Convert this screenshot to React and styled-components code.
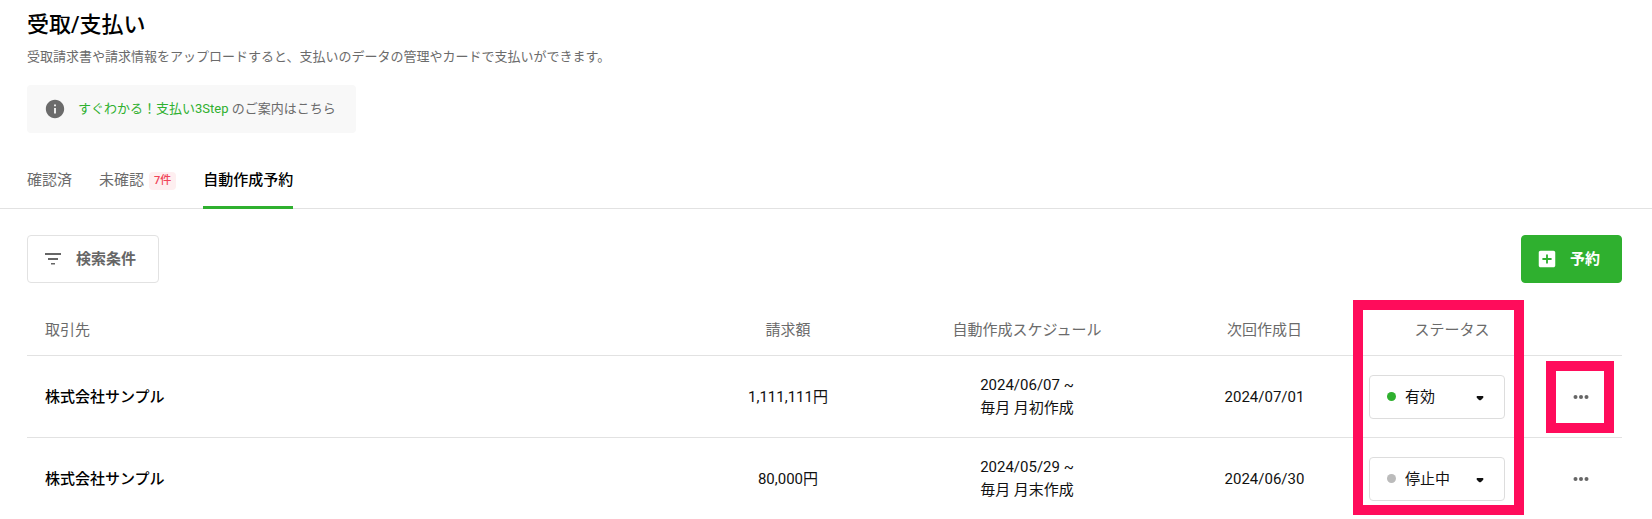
import React, { useState } from 'react'
import styled, { createGlobalStyle } from 'styled-components'

const GlobalStyle = createGlobalStyle`
  * {
    box-sizing: border-box;
  }
  body {
    margin: 0;
    background: #fff;
    color: #111;
    font-family: Roboto, 'Noto Sans CJK JP', sans-serif;
    font-size: 15px;
    line-height: 23px;
  }
  button, select {
    font: inherit;
    color: inherit;
  }
`;

const Page = styled.main`
  padding: 8px 0 0;
`;

const Header = styled.header`
  padding: 0 30px 0 27px;
`;

const Title = styled.h1`
  margin: 0;
  font-size: 22px;
  font-weight: 500;
  line-height: 33px;
  color: #000;
`;

const Description = styled.p`
  margin: 6px 0 18px;
  font-size: 13px;
  line-height: 20px;
  color: #6b6b6b;
`;

const Notice = styled.div`
  display: inline-flex;
  align-items: center;
  gap: 12px;
  height: 48px;
  padding: 0 20px 0 17px;
  border-radius: 4px;
  background: #f8f8f8;
  font-size: 13px;
  line-height: 20px;
  color: #6b6b6b;
`;

const NoticeLink = styled.a`
  color: #2fb02f;
  text-decoration: none;
`;

const Tabs = styled.nav`
  display: flex;
  gap: 27px;
  height: 56px;
  margin-top: 20px;
  padding: 0 27px;
  border-bottom: 1px solid #e2e2e2;
`;

const Tab = styled.a`
  display: flex;
  align-items: center;
  height: 56px;
  padding-top: 1px;
  border-bottom: 3px solid ${({ $active }) => ($active ? '#2fb02f' : 'transparent')};
  font-weight: ${({ $active }) => ($active ? 500 : 400)};
  color: ${({ $active }) => ($active ? '#000' : '#6b6b6b')};
  text-decoration: none;
`;

const Badge = styled.span`
  margin: 2px 0 0 5px;
  padding: 0 5px;
  border-radius: 4px;
  background: #feeff0;
  font-size: 11px;
  font-weight: 500;
  line-height: 18px;
  color: #f04458;
`;

const Toolbar = styled.div`
  display: flex;
  justify-content: space-between;
  padding: 26px 30px 23px 27px;
`;

const Button = styled.button`
  display: flex;
  align-items: center;
  gap: ${({ $primary }) => ($primary ? 12 : 14)}px;
  height: 48px;
  padding: 0 ${({ $primary }) => ($primary ? 21 : 22)}px 0 ${({ $primary }) => ($primary ? 14 : 16)}px;
  border: 1px solid ${({ $primary }) => ($primary ? '#2fb02f' : '#e2e2e2')};
  border-radius: 4px;
  background: ${({ $primary }) => ($primary ? '#2fb02f' : '#fff')};
  color: ${({ $primary }) => ($primary ? '#fff' : '#666')};
  font-weight: 700;
  cursor: pointer;
`;

const TableArea = styled.section`
  position: relative;
  margin: 0 30px 0 27px;
`;

const Table = styled.table`
  width: 100%;
  table-layout: fixed;
  border-collapse: collapse;
`;

const Th = styled.th`
  width: ${({ $width }) => $width || 'auto'};
  height: 49px;
  padding: 1px 18px 0;
  border-bottom: 1px solid #e2e2e2;
  font-weight: 400;
  color: #6b6b6b;
  text-align: ${({ $align }) => $align || 'center'};
`;

const Row = styled.tr`
  height: 82px;
  border-bottom: 1px solid #e2e2e2;

  &:last-child {
    border-bottom: 0;
  }
`;

const Td = styled.td`
  padding: 2px 0 0;
  text-align: center;
`;

const Company = styled(Td)`
  padding-left: 18px;
  font-weight: 500;
  color: #000;
  text-align: left;
`;

const StatusCell = styled(Td)`
  padding-left: 5px;
  text-align: left;
`;

const StatusField = styled.div`
  position: relative;
  width: 136px;
  height: 44px;

  svg {
    position: absolute;
    top: 10px;
    right: 13px;
    pointer-events: none;
  }
`;

const StatusDot = styled.span`
  position: absolute;
  top: 17px;
  left: 18px;
  width: 9px;
  height: 9px;
  border-radius: 50%;
  background: ${({ $on }) => ($on ? '#2fb02f' : '#bbb')};
  pointer-events: none;
`;

const StatusSelect = styled.select`
  appearance: none;
  width: 100%;
  height: 100%;
  padding: 0 35px;
  border: 1px solid #ddd;
  border-radius: 4px;
  background: #fff;
`;

const MoreButton = styled.button`
  padding: 0;
  border: 0;
  background: none;
  color: #666;
  vertical-align: middle;
  cursor: pointer;

  svg {
    display: block;
  }
`;

const Highlight = styled.div`
  position: absolute;
  top: ${({ $top }) => $top}px;
  right: ${({ $right }) => $right}px;
  width: ${({ $width }) => $width}px;
  height: ${({ $height }) => $height}px;
  border: 10px solid #ff0c5b;
  pointer-events: none;
`;

const InfoIcon = () => (
  <svg width="22" height="22" viewBox="0 0 24 24" fill="currentColor">
    <path d="M12 2C6.48 2 2 6.48 2 12s4.48 10 10 10 10-4.48 10-10S17.52 2 12 2zm1 15h-2v-6h2v6zm0-8h-2V7h2v2z" />
  </svg>
);

const FilterIcon = () => (
  <svg width="18" height="18" viewBox="0 0 18 18" fill="currentColor">
    <path d="M1 3h16v2H1zM4 8h10v2H4zM7 13h4v1.500H7z" />
  </svg>
);

const AddIcon = () => (
  <svg width="22" height="22" viewBox="0 0 24 24" fill="currentColor">
    <path d="M19 3H5c-1.11 0-2 .9-2 2v14c0 1.1.89 2 2 2h14c1.1 0 2-.9 2-2V5c0-1.1-.9-2-2-2zm-2 10h-4v4h-2v-4H7v-2h4V7h2v4h4v2z" />
  </svg>
);

const CaretIcon = () => (
  <svg width="24" height="24" viewBox="0 0 24 24" fill="currentColor">
    <path d="M9 11h6q1 1 0 2l-2 2q-1 .6-2 0l-2-2q-1-1 0-2z" />
  </svg>
);

const MoreIcon = () => (
  <svg width="24" height="24" viewBox="0 0 24 24" fill="currentColor">
    <circle cx="6.500" cy="12" r="2" />
    <circle cx="12" cy="12" r="2" />
    <circle cx="17.500" cy="12" r="2" />
  </svg>
);

const reservations = [
  { id: 1, company: '株式会社サンプル', amount: '1,111,111円', from: '2024/06/07 ~', cycle: '毎月 月初作成', next: '2024/07/01', status: 'active' },
  { id: 2, company: '株式会社サンプル', amount: '80,000円', from: '2024/05/29 ~', cycle: '毎月 月末作成', next: '2024/06/30', status: 'stopped' },
];

const Status = ({ initial }) => {
  const [status, setStatus] = useState(initial);
  return (
    <StatusField>
      <StatusSelect aria-label="ステータス" value={status} onChange={(e) => setStatus(e.target.value)}>
        <option value="active">有効</option>
        <option value="stopped">停止中</option>
      </StatusSelect>
      <StatusDot $on={status === 'active'} />
      <CaretIcon />
    </StatusField>
  );
}

const App = () => {
  return (
    <Page>
      <GlobalStyle />
      <Header>
        <Title>受取/支払い</Title>
        <Description>受取請求書や請求情報をアップロードすると、支払いのデータの管理やカードで支払いができます。</Description>
        <Notice>
          <InfoIcon />
          <span><NoticeLink href="#guide">すぐわかる！支払い3Step</NoticeLink> のご案内はこちら</span>
        </Notice>
      </Header>
      <Tabs>
        <Tab href="#confirmed">確認済</Tab>
        <Tab href="#unconfirmed">未確認<Badge>7件</Badge></Tab>
        <Tab href="#reserved" $active aria-current="page">自動作成予約</Tab>
      </Tabs>
      <Toolbar>
        <Button type="button"><FilterIcon />検索条件</Button>
        <Button type="button" $primary><AddIcon />予約</Button>
      </Toolbar>
      <TableArea>
        <Table>
          <thead>
            <tr>
              <Th $align="left">取引先</Th>
              <Th $width="202px">請求額</Th>
              <Th $width="276px">自動作成スケジュール</Th>
              <Th $width="199px">次回作成日</Th>
              <Th $width="176px">ステータス</Th>
              <Th $width="82px" aria-label="操作" />
            </tr>
          </thead>
          <tbody>
            {reservations.map((item) => (
              <Row key={item.id}>
                <Company>{item.company}</Company>
                <Td>{item.amount}</Td>
                <Td>{item.from}<br />{item.cycle}</Td>
                <Td>{item.next}</Td>
                <StatusCell><Status initial={item.status} /></StatusCell>
                <Td>
                  <MoreButton type="button" aria-label="メニュー"><MoreIcon /></MoreButton>
                </Td>
              </Row>
            ))}
          </tbody>
        </Table>
        <Highlight $top={-6} $right={98} $width={171} $height={215} />
        <Highlight $top={55} $right={8} $width={68} $height={72} />
      </TableArea>
    </Page>
  );
}

export default App
